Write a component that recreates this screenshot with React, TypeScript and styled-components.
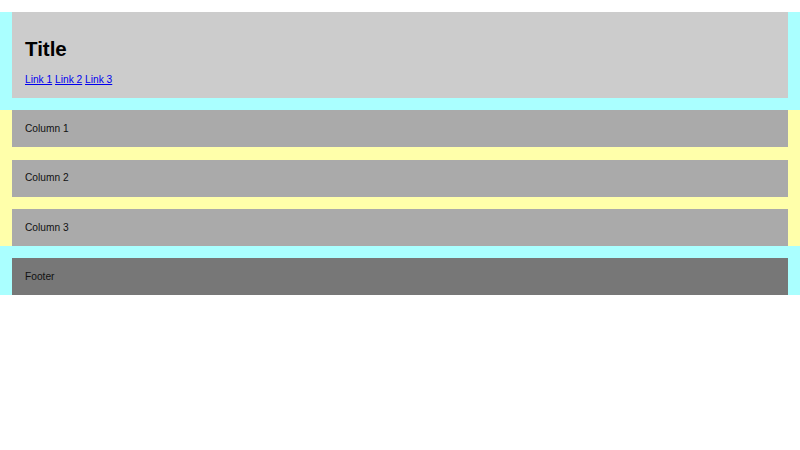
import React from "react";
import styled, { createGlobalStyle } from "styled-components";

const GlobalStyle = createGlobalStyle`
  body {
    margin: 0;
    background: #ffffff;
    font-family: "Liberation Sans", Arial, sans-serif;
  }
`;

const Page = styled.div`
  padding-top: 12px;
`;

const Band = styled.section<{ $bg: string; $pt?: number; $pb?: number }>`
  background: ${(p) => p.$bg};
  padding: ${(p) => p.$pt ?? 0}px 12px ${(p) => p.$pb ?? 0}px;
  display: flex;
  flex-direction: column;
  gap: 12.5px;
`;

const HeaderBox = styled.header`
  background: #cccccc;
  padding: 12px 13px;
`;

const Title = styled.h1`
  margin: 13px 0 13px;
  font-size: 20.5px;
  line-height: 24px;
  font-weight: bold;
  color: #000;
`;

const Nav = styled.nav`
  font-size: 10.2px;
  line-height: 12px;

  a {
    color: #0000ee;
    text-decoration: underline;
  }
`;

const Block = styled.div<{ $bg: string }>`
  background: ${(p) => p.$bg};
  padding: 12.5px 13px;
  font-size: 10.2px;
  line-height: 12px;
  color: #111;
`;

const App: React.FC = () => {
  return (
    <>
      <GlobalStyle />
      <Page>
        <Band $bg="#aaffff" $pb={12}>
          <HeaderBox>
            <Title>Title</Title>
            <Nav>
              <a href="#">Link 1</a> <a href="#">Link 2</a>{" "}
              <a href="#">Link 3</a>
            </Nav>
          </HeaderBox>
        </Band>
        <Band $bg="#ffffaa">
          <Block $bg="#aaaaaa">Column 1</Block>
          <Block $bg="#aaaaaa">Column 2</Block>
          <Block $bg="#aaaaaa">Column 3</Block>
        </Band>
        <Band $bg="#aaffff" $pt={12}>
          <Block $bg="#777777">Footer</Block>
        </Band>
      </Page>
    </>
  );
};

export default App;
